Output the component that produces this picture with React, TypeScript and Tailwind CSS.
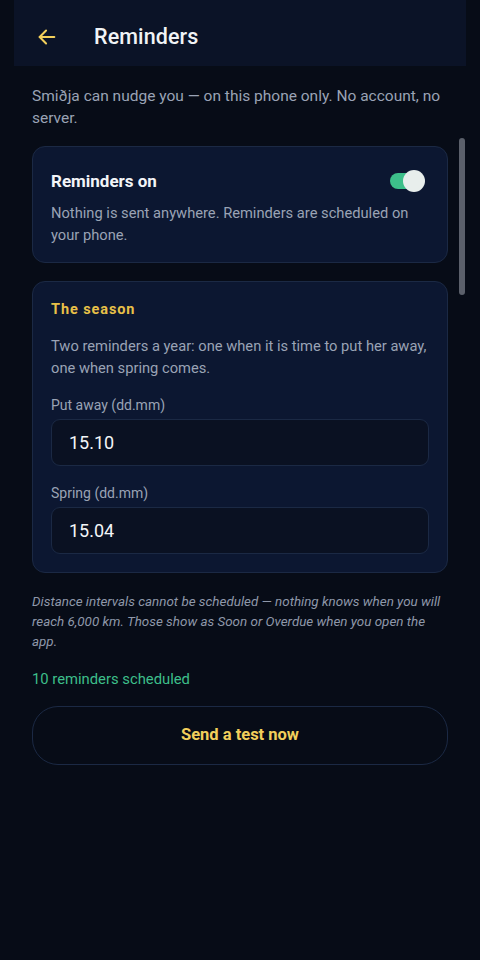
import React from "react";

export default function App() {
  return (
    <div
      className="relative w-[480px] h-[960px] bg-[#070c17] overflow-hidden"
      style={{ fontFamily: "Roboto, 'Noto Sans', sans-serif" }}
    >
      <header className="mx-[14px] h-[66px] bg-[#0b1327] flex items-center pt-[8px]">
        <div className="w-[80px] pl-[22px] flex items-center">
          <svg width="22" height="22" viewBox="0 0 24 24" fill="none" stroke="#f2cf5b" strokeWidth="2.2" strokeLinecap="round" strokeLinejoin="round">
            <path d="M20 12H4" />
            <path d="M11 5l-7 7 7 7" />
          </svg>
        </div>
        <h1 className="text-[21.5px] leading-[28px] font-medium text-[#f1f3f6] tracking-[0.1px]">Reminders</h1>
      </header>

      <div className="px-[32px] pt-[19px]">
        <p className="text-[15.5px] leading-[22px] text-[#9aa3b5]">
          Smiðja can nudge you — on this phone only. No account, no server.
        </p>

        <section className="mt-[17px] rounded-[13px] border border-[#1b2944] bg-[#0c1731] px-[18px] pt-[22px] pb-[16px]">
          <div className="flex items-center justify-between h-[24px]">
            <h2 className="text-[17px] leading-[24px] font-bold text-[#f3f5f8]">Reminders on</h2>
            <div className="relative w-[36px] h-[22px] mr-[3px] flex items-center">
              <div className="w-[24px] h-[16px] rounded-full bg-[#3dbf8a]" />
              <div className="absolute left-[13px] top-0 w-[22px] h-[22px] rounded-full bg-[#e8eeec]" />
            </div>
          </div>
          <p className="mt-[9px] text-[14.7px] leading-[22px] text-[#9aa3b5]">
            Nothing is sent anywhere. Reminders are scheduled on your phone.
          </p>
        </section>

        <section className="mt-[18px] rounded-[13px] border border-[#1b2944] bg-[#0c1731] px-[18px] pt-[18px] pb-[18px]">
          <h3 className="text-[14.5px] leading-[20px] font-bold tracking-[0.9px] text-[#e8c048]">The season</h3>
          <p className="mt-[15px] text-[14.7px] leading-[22px] text-[#9aa3b5]">
            Two reminders a year: one when it is time to put her away, one when spring comes.
          </p>
          <label className="block mt-[16px] text-[14px] leading-[20px] text-[#9aa3b5]">Put away (dd.mm)</label>
          <div className="mt-[4px] h-[47px] rounded-[9px] border border-[#1b2944] bg-[#0a1122] flex items-center px-[17px] text-[18px] text-[#f3f5f8]">
            15.10
          </div>
          <label className="block mt-[17px] text-[14px] leading-[20px] text-[#9aa3b5]">Spring (dd.mm)</label>
          <div className="mt-[4px] h-[47px] rounded-[9px] border border-[#1b2944] bg-[#0a1122] flex items-center px-[17px] text-[18px] text-[#f3f5f8]">
            15.04
          </div>
        </section>

        <p className="mt-[19px] text-[13.4px] leading-[20px] italic text-[#8f98aa]">
          Distance intervals cannot be scheduled — nothing knows when you will reach 6,000 km. Those show as Soon or Overdue when you open the app.
        </p>

        <p className="mt-[16px] text-[14.8px] leading-[22px] text-[#3dbf8a]">10 reminders scheduled</p>

        <button className="mt-[16px] w-full h-[59px] rounded-[26px] border border-[#1b2944] bg-transparent text-[16.5px] font-bold text-[#f2cf5b]">
          Send a test now
        </button>
      </div>

      <div className="absolute left-[459px] top-[138px] w-[6px] h-[157px] rounded-full bg-[#5b606b]" />
    </div>
  );
}
